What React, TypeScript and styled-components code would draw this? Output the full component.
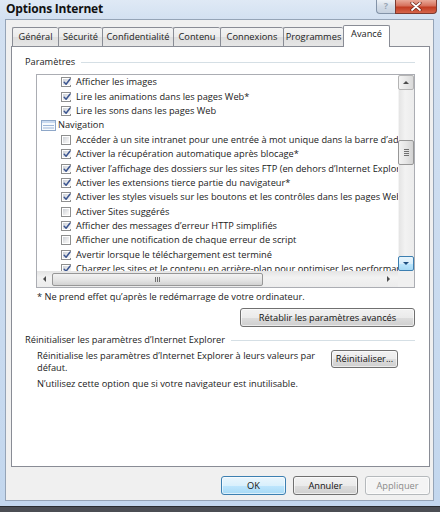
import React from 'react';
import styled, { createGlobalStyle } from 'styled-components';

// -----------------------------------------------------------------------------
// Data
// -----------------------------------------------------------------------------
type Item =
  | { kind: 'check'; checked: boolean; text: string }
  | { kind: 'cat'; text: string };

const TABS = [
  { label: 'Général', width: 46 },
  { label: 'Sécurité', width: 44 },
  { label: 'Confidentialité', width: 71 },
  { label: 'Contenu', width: 47 },
  { label: 'Connexions', width: 63 },
  { label: 'Programmes', width: 60 },
  { label: 'Avancé', width: 47, active: true },
];

const ITEMS: Item[] = [
  { kind: 'check', checked: true, text: 'Afficher les images' },
  { kind: 'check', checked: true, text: 'Lire les animations dans les pages Web*' },
  { kind: 'check', checked: true, text: 'Lire les sons dans les pages Web' },
  { kind: 'cat', text: 'Navigation' },
  { kind: 'check', checked: false, text: 'Accéder à un site intranet pour une entrée à mot unique dans la barre d’adresses' },
  { kind: 'check', checked: true, text: 'Activer la récupération automatique après blocage*' },
  { kind: 'check', checked: true, text: 'Activer l’affichage des dossiers sur les sites FTP (en dehors d’Internet Explorer)' },
  { kind: 'check', checked: true, text: 'Activer les extensions tierce partie du navigateur*' },
  { kind: 'check', checked: true, text: 'Activer les styles visuels sur les boutons et les contrôles dans les pages Web' },
  { kind: 'check', checked: false, text: 'Activer Sites suggérés' },
  { kind: 'check', checked: true, text: 'Afficher des messages d’erreur HTTP simplifiés' },
  { kind: 'check', checked: false, text: 'Afficher une notification de chaque erreur de script' },
  { kind: 'check', checked: true, text: 'Avertir lorsque le téléchargement est terminé' },
  { kind: 'check', checked: true, text: 'Charger les sites et le contenu en arrière-plan pour optimiser les performances*' },
];

// -----------------------------------------------------------------------------
// Global
// -----------------------------------------------------------------------------
const GlobalStyle = createGlobalStyle`
  html, body {
    margin: 0;
    padding: 0;
  }
  body {
    background: #4b4e53;
    font-family: "Open Sans", "Liberation Sans", sans-serif;
    font-size: 9.25px;
    color: #1b1b1b;
  }
`;

// -----------------------------------------------------------------------------
// Window chrome
// -----------------------------------------------------------------------------
const Window = styled.div`
  width: 440px;
  box-sizing: border-box;
  display: flex;
  flex-direction: column;
  padding: 0 6px 5px 5px;
  background: linear-gradient(to bottom, #dfe9f5 0, #d2e0f1 20px, #c3d7ee 100%);
  border-bottom: 1px solid #2a2d31;
`;

const TitleBar = styled.div`
  height: 19px;
  display: flex;
  align-items: flex-start;
`;

const Title = styled.div`
  padding: 2px 0 0 1px;
  font-size: 12px;
  font-weight: 700;
  line-height: 14px;
  letter-spacing: -0.2px;
  color: #111;
`;

const Captions = styled.div`
  margin-left: auto;
  margin-right: -3px;
  display: flex;
`;

const HelpButton = styled.div`
  width: 19px;
  height: 14px;
  box-sizing: border-box;
  border: 1px solid #8393a8;
  border-top: none;
  border-right: none;
  border-radius: 0 0 0 4px;
  background: linear-gradient(to bottom, #eef2f7, #d3dce7 50%, #c6d1df);
  color: #9aa6b5;
  font-size: 9px;
  font-weight: 700;
  line-height: 12px;
  text-align: center;
`;

const CloseButton = styled.div`
  width: 42px;
  height: 14px;
  box-sizing: border-box;
  border: 1px solid #7d3a30;
  border-top: none;
  border-radius: 0 0 4px 0;
  background: linear-gradient(to bottom, #e9a999 0, #d6715c 45%, #c23c22 55%, #d5644a 100%);
  display: flex;
  align-items: center;
  justify-content: center;
`;

const Client = styled.div`
  background: #f0f0f0;
  border: 1px solid #95a4b7;
  padding: 5px 3px 5px 5px;
  display: flex;
  flex-direction: column;
`;

// -----------------------------------------------------------------------------
// Tabs
// -----------------------------------------------------------------------------
const TabRow = styled.div`
  height: 21px;
  display: flex;
  align-items: flex-end;
  padding-left: 1px;
  position: relative;
  z-index: 1;
`;

const Tab = styled.div<{ $width: number; $active?: boolean }>`
  width: ${(p) => p.$width}px;
  height: ${(p) => (p.$active ? 22 : 19)}px;
  margin-bottom: ${(p) => (p.$active ? -1 : 0)}px;
  box-sizing: border-box;
  border: 1px solid #898c95;
  border-bottom: none;
  border-right: ${(p) => (p.$active ? '1px solid #898c95' : 'none')};
  border-radius: 2px 2px 0 0;
  background: ${(p) =>
    p.$active ? '#ffffff' : 'linear-gradient(to bottom, #f3f3f3 0, #ebebeb 50%, #dedede 51%, #e6e6e6 100%)'};
  display: flex;
  justify-content: center;
  padding-top: ${(p) => (p.$active ? 2 : 3)}px;
  line-height: 12px;
  white-space: nowrap;
`;

const Panel = styled.div`
  width: 419px;
  height: 421px;
  box-sizing: border-box;
  background: #ffffff;
  border: 1px solid #898c95;
  padding: 9px 14px 0 13px;
  display: flex;
  flex-direction: column;
`;

const GroupHeader = styled.div<{ $top?: number }>`
  display: flex;
  align-items: center;
  gap: 6px;
  height: 12px;
  line-height: 12px;
  margin-top: ${(p) => p.$top ?? 0}px;
  white-space: nowrap;
`;

const GroupLine = styled.div`
  flex: 1;
  height: 1px;
  background: #d5dfe5;
`;

// -----------------------------------------------------------------------------
// List box
// -----------------------------------------------------------------------------
const ListBox = styled.div`
  margin: 6px 0 0 11px;
  height: 214px;
  box-sizing: border-box;
  border: 1px solid #abadb3;
  display: grid;
  grid-template-columns: 1fr 16px;
  grid-template-rows: 1fr 16px;
  overflow: hidden;
`;

const Rows = styled.div`
  overflow: hidden;
  min-width: 0;
`;

const Row = styled.div<{ $indent: number }>`
  height: 14.4px;
  display: flex;
  align-items: center;
  padding-left: ${(p) => p.$indent}px;
  white-space: nowrap;
  line-height: 12px;
`;

const Check = styled.span`
  width: 10px;
  height: 10px;
  flex: none;
  box-sizing: border-box;
  margin-right: 5px;
  border: 1px solid #8e8f8f;
  background: #fff;
  padding: 1px;
  display: flex;
`;

const CheckInner = styled.span`
  flex: 1;
  background: linear-gradient(135deg, #cdd1d7 0, #f0f0f0 70%, #f7f7f7 100%);
  display: flex;
  align-items: center;
  justify-content: center;
`;

const CatIcon = styled.svg`
  flex: none;
  margin-right: 2px;
`;

const VScroll = styled.div`
  background: linear-gradient(to right, #e4e4e4, #f2f2f2 40%, #ececec);
  border-left: 1px solid #f4f4f4;
  display: flex;
  flex-direction: column;
  box-sizing: border-box;
`;

const ScrollSpace = styled.div`
  flex: 1;
`;

const ArrowButton = styled.div<{ $hover?: boolean }>`
  height: 15px;
  box-sizing: border-box;
  margin: 0 0 0 -1px;
  border: 1px solid ${(p) => (p.$hover ? '#3c7fb1' : '#b4b4b4')};
  border-radius: 2px;
  background: ${(p) =>
    p.$hover
      ? 'linear-gradient(to bottom, #e8f5fc, #d8eefb 50%, #bde6fd 51%, #a6d9f4)'
      : 'linear-gradient(to right, #f4f4f4, #e8e8e8 50%, #dadada)'};
  display: flex;
  align-items: center;
  justify-content: center;
`;

const VThumb = styled.div<{ $offset: number }>`
  margin: ${(p) => p.$offset}px 0 0 -1px;
  height: 25px;
  box-sizing: border-box;
  border: 1px solid #979797;
  border-radius: 2px;
  background: linear-gradient(to right, #f2f2f2, #e6e6e6 50%, #d2d2d2);
  display: flex;
  flex-direction: column;
  align-items: center;
  justify-content: center;
  gap: 1px;
`;

const GripLine = styled.span<{ $vertical?: boolean }>`
  width: ${(p) => (p.$vertical ? 1 : 5)}px;
  height: ${(p) => (p.$vertical ? 5 : 1)}px;
  background: #707070;
`;

const HScroll = styled.div`
  background: linear-gradient(to bottom, #e4e4e4, #f2f2f2 40%, #ececec);
  display: flex;
  align-items: center;
`;

const HArrow = styled.div<{ $end?: boolean }>`
  width: ${(p) => (p.$end ? 18 : 15)}px;
  margin-left: ${(p) => (p.$end ? 'auto' : '0')};
  height: 16px;
  display: flex;
  align-items: center;
  justify-content: center;
`;

const HThumb = styled.div<{ $width: number }>`
  width: ${(p) => p.$width}px;
  height: 13px;
  box-sizing: border-box;
  border: 1px solid #979797;
  border-radius: 2px;
  background: linear-gradient(to bottom, #f2f2f2, #e6e6e6 50%, #d2d2d2);
  display: flex;
  align-items: center;
  justify-content: center;
  gap: 1px;
`;

const Corner = styled.div`
  background: #f0f0f0;
`;

// -----------------------------------------------------------------------------
// Text and buttons
// -----------------------------------------------------------------------------
const Note = styled.div<{ $top: number }>`
  margin: ${(p) => p.$top}px 0 0 12px;
  line-height: 12px;
`;

const Button = styled.div<{ $width: number; $height?: number; $variant?: 'default' | 'disabled' }>`
  width: ${(p) => p.$width}px;
  height: ${(p) => p.$height ?? 19}px;
  flex: none;
  box-sizing: border-box;
  border: 1px solid
    ${(p) => (p.$variant === 'default' ? '#3c7fb1' : p.$variant === 'disabled' ? '#b5b9bc' : '#707070')};
  border-radius: 3px;
  background: ${(p) =>
    p.$variant === 'disabled'
      ? '#f4f4f4'
      : p.$variant === 'default'
      ? 'linear-gradient(to bottom, #eaf6fd 0, #d9f0fc 50%, #bee6fd 51%, #a7d9f5 100%)'
      : 'linear-gradient(to bottom, #f2f2f2 0, #ebebeb 50%, #dddddd 51%, #cfcfcf 100%)'};
  box-shadow: inset 0 0 0 1px rgba(255, 255, 255, 0.6);
  color: ${(p) => (p.$variant === 'disabled' ? '#8a8a8a' : '#111')};
  display: flex;
  align-items: center;
  justify-content: center;
  line-height: 12px;
  white-space: nowrap;
`;

const RightRow = styled.div<{ $top: number }>`
  margin-top: ${(p) => p.$top}px;
  display: flex;
  justify-content: flex-end;
  gap: 7px;
`;

const ResetRow = styled.div`
  margin: 4px 17px 0 12px;
  display: flex;
  justify-content: space-between;
  align-items: flex-start;
`;

const ResetText = styled.div`
  width: 285px;
  line-height: 12px;
`;

// -----------------------------------------------------------------------------
// Small drawings
// -----------------------------------------------------------------------------
const CheckMark = () => (
  <svg width="8" height="8" viewBox="0 0 8 8">
    <path d="M1.2 4.2 L3.1 6.2 L6.9 1.3" fill="none" stroke="#3b5590" strokeWidth="1.5" strokeLinecap="round" strokeLinejoin="round" />
  </svg>
);

const Arrow = ({ dir, color = '#4d4d4d' }: { dir: 'up' | 'down' | 'left' | 'right'; color?: string }) => {
  const pts = {
    up: '1,5 4,2 7,5',
    down: '1,2 4,5 7,2',
    left: '5,1 2,4 5,7',
    right: '2,1 5,4 2,7',
  }[dir];
  return (
    <svg width="8" height="8" viewBox="0 0 8 8">
      <polygon points={pts} fill={color} />
    </svg>
  );
};

const CheckRow = ({ checked, text }: { checked: boolean; text: string }) => (
  <Row $indent={24}>
    <Check>
      <CheckInner>{checked && <CheckMark />}</CheckInner>
    </Check>
    {text}
  </Row>
);

const CatRow = ({ text }: { text: string }) => (
  <Row $indent={4}>
    <CatIcon width="15" height="11" viewBox="0 0 15 11">
      <rect x="0.5" y="0.5" width="14" height="10" fill="#f7fafd" stroke="#8ea7c8" />
      <rect x="1" y="1" width="13" height="2" fill="#c9daf0" />
      <line x1="2" y1="5.5" x2="13" y2="5.5" stroke="#9db6d8" />
      <line x1="2" y1="8" x2="13" y2="8" stroke="#9db6d8" />
    </CatIcon>
    {text}
  </Row>
);

// -----------------------------------------------------------------------------
// Component
// -----------------------------------------------------------------------------
const App = (): JSX.Element => (
  <>
    <GlobalStyle />
    <Window>
      <TitleBar>
        <Title>Options Internet</Title>
        <Captions>
          <HelpButton>?</HelpButton>
          <CloseButton>
            <svg width="12" height="9" viewBox="0 0 12 9">
              <path d="M2 1 L10 8 M10 1 L2 8" stroke="#6b2418" strokeWidth="3.2" strokeLinecap="round" />
              <path d="M2 1 L10 8 M10 1 L2 8" stroke="#ffffff" strokeWidth="1.8" strokeLinecap="round" />
            </svg>
          </CloseButton>
        </Captions>
      </TitleBar>

      <Client>
        <TabRow>
          {TABS.map((t) => (
            <Tab key={t.label} $width={t.width} $active={t.active}>
              {t.label}
            </Tab>
          ))}
        </TabRow>

        <Panel>
          <GroupHeader>
            Paramètres
            <GroupLine />
          </GroupHeader>

          <ListBox>
            <Rows>
              {ITEMS.map((it, i) =>
                it.kind === 'cat' ? (
                  <CatRow key={i} text={it.text} />
                ) : (
                  <CheckRow key={i} checked={it.checked} text={it.text} />
                )
              )}
            </Rows>
            <VScroll>
              <ArrowButton>
                <Arrow dir="up" />
              </ArrowButton>
              <VThumb $offset={50}>
                <GripLine />
                <GripLine />
                <GripLine />
                <GripLine />
              </VThumb>
              <ScrollSpace />
              <ArrowButton $hover>
                <Arrow dir="down" color="#1d4f80" />
              </ArrowButton>
            </VScroll>
            <HScroll>
              <HArrow>
                <Arrow dir="left" />
              </HArrow>
              <HThumb $width={211}>
                <GripLine $vertical />
                <GripLine $vertical />
                <GripLine $vertical />
              </HThumb>
              <HArrow $end>
                <Arrow dir="right" />
              </HArrow>
            </HScroll>
            <Corner />
          </ListBox>

          <Note $top={3}>* Ne prend effet qu’après le redémarrage de votre ordinateur.</Note>

          <RightRow $top={5}>
            <Button $width={175}>Rétablir les paramètres avancés</Button>
          </RightRow>

          <GroupHeader $top={7}>
            Réinitialiser les paramètres d’Internet Explorer
            <GroupLine />
          </GroupHeader>

          <ResetRow>
            <ResetText>Réinitialise les paramètres d’Internet Explorer à leurs valeurs par défaut.</ResetText>
            <Button $width={67} $height={18}>
              Réinitialiser...
            </Button>
          </ResetRow>

          <Note $top={4}>N’utilisez cette option que si votre navigateur est inutilisable.</Note>
        </Panel>

        <RightRow $top={9}>
          <Button $width={65} $variant="default">
            OK
          </Button>
          <Button $width={65}>Annuler</Button>
          <Button $width={65} $variant="disabled">
            Appliquer
          </Button>
        </RightRow>
      </Client>
    </Window>
  </>
);

export default App;
